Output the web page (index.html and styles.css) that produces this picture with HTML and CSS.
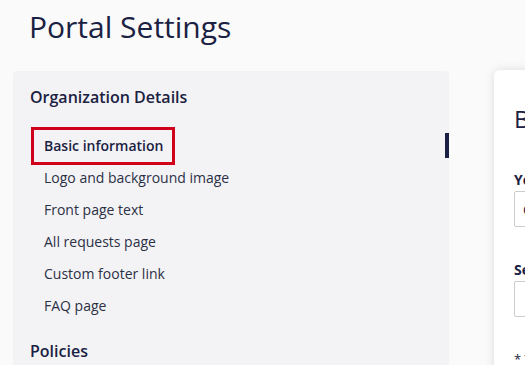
FILE: index.html
```html
<!DOCTYPE html>
<html lang="en">
<head>
    <meta charset="UTF-8">
    <meta name="viewport" content="width=device-width, initial-scale=1.0">
    <title>Portal Settings</title>
    <link rel="stylesheet" href="styles.css">
</head>
<body>

    <h1 class="page-title">Portal Settings</h1>

    <div class="layout">
        <!-- Side menu -->
        <div class="sidebar">
            <h3>Organization Details</h3>
            <ul class="menu">
                <li class="active"><a href="#">Basic information</a></li>
                <li><a href="#">Logo and background image</a></li>
                <li><a href="#">Front page text</a></li>
                <li><a href="#">All requests page</a></li>
                <li><a href="#">Custom footer link</a></li>
                <li><a href="#">FAQ page</a></li>
            </ul>
            <h3>Policies</h3>
        </div>

        <!-- Settings form -->
        <div class="card">
            <h2>Basic information</h2>
            <label for="orgName">Your organization name</label>
            <input type="text" id="orgName" value="City">
            <label for="subdomain">Select a subdomain</label>
            <input type="text" id="subdomain">
            <p class="note">* This field is required</p>
        </div>
    </div>

</body>
</html>
```

FILE: styles.css
```css
body {
    font-family: "Open Sans", sans-serif;
    margin: 0;
    padding: 0;
    background-color: #fafafa;
    color: #1b2142;
    overflow: hidden;
}

.page-title {
    font-size: 30px;
    font-weight: 400;
    margin: 0;
    padding: 5px 0 0 29px;
    line-height: 44px;
}

.layout {
    display: flex;
    gap: 45px;
    margin-top: 22px;
    padding-left: 13px;
}

/* Side menu */
.sidebar {
    width: 436px;
    flex-shrink: 0;
    background-color: #f3f3f5;
    border-radius: 4px;
    padding: 15px 0 0 17px;
    box-sizing: border-box;
    height: 320px;
    position: relative;
}

.sidebar h3 {
    font-size: 16px;
    font-weight: 600;
    margin: 0;
    line-height: 22px;
}

.menu {
    list-style-type: none;
    padding: 0;
    margin: 19px 0 18px;
}

.menu li {
    margin: 0;
}

.menu li.active {
    margin-bottom: -3px;
}

.menu a {
    display: inline-block;
    color: #2b3046;
    text-decoration: none;
    font-size: 14px;
    line-height: 20px;
    padding: 6px 11px 6px 14px;
    border: 3px solid transparent;
}

.menu li.active a {
    font-weight: 600;
    color: #1b2142;
    border-color: #d0021b;
    padding: 6px 9px 6px 10px;
    margin-left: 1px;
}

.menu li.active::after {
    content: "";
    position: absolute;
    right: 0;
    top: 62px;
    width: 4px;
    height: 25px;
    background-color: #1b1f45;
}

.menu li + li a {
    padding-top: 3px;
    padding-bottom: 3px;
    margin-left: -3px;
}

/* Settings card */
.card {
    flex-shrink: 0;
    width: 400px;
    height: 320px;
    background-color: #fff;
    border-radius: 6px;
    box-shadow: 0 0 10px rgba(0, 0, 0, 0.12);
    margin-top: -1px;
    padding: 33px 20px 0;
    box-sizing: border-box;
}

.card h2 {
    font-size: 24px;
    font-weight: 400;
    margin: 0 0 35px;
    line-height: 32px;
}

.card label {
    display: block;
    font-size: 14px;
    font-weight: 700;
    margin-bottom: 2px;
}

.card input {
    display: block;
    width: 100%;
    height: 36px;
    box-sizing: border-box;
    border: 1px solid #ccc;
    border-radius: 2px;
    padding: 0 8px;
    font-family: "Open Sans", sans-serif;
    font-size: 14px;
    color: #1b2142;
    margin-bottom: 33px;
}

.note {
    font-size: 13px;
    margin: 0;
}
```
